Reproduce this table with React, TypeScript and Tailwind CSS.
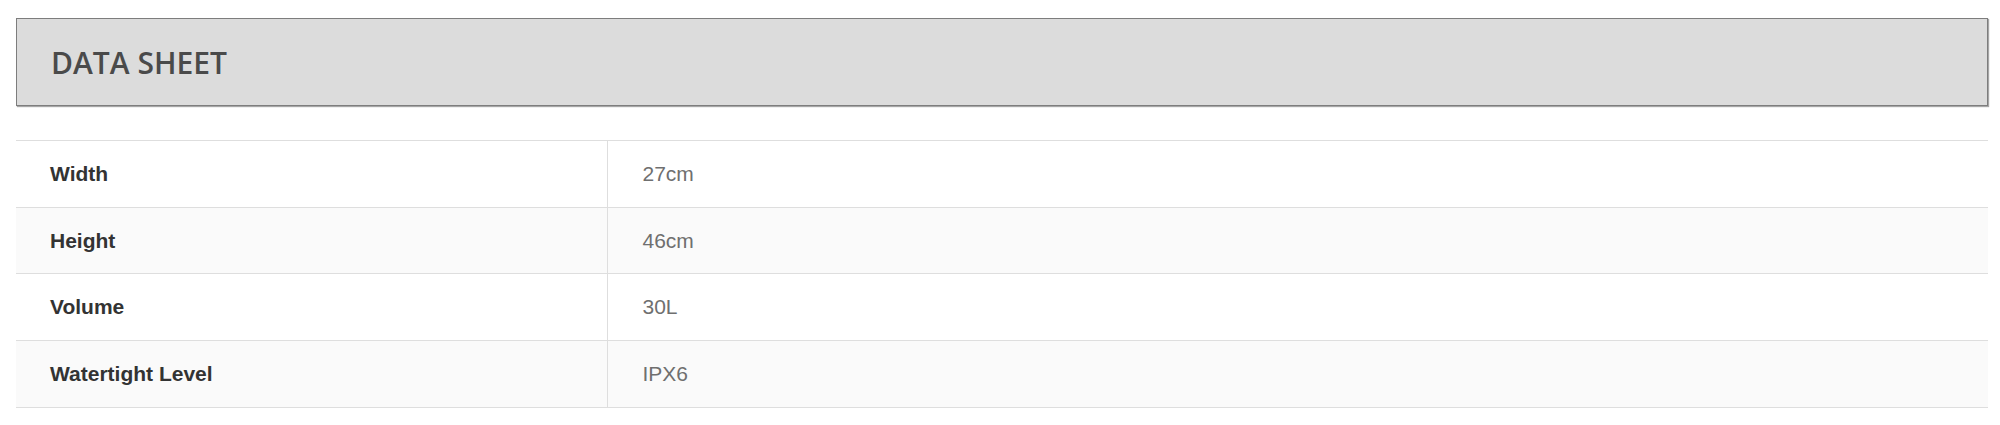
import React from "react";

interface SpecRow {
  label: string;
  value: string;
}

const specs: SpecRow[] = [
  { label: "Width", value: "27cm" },
  { label: "Height", value: "46cm" },
  { label: "Volume", value: "30L" },
  { label: "Watertight Level", value: "IPX6" },
];

const App: React.FC = () => {
  return (
    <div className="w-[2000px] h-[425px] bg-white pl-[16px] pr-[12px] pt-[18px]">
      <div className="h-[88px] bg-[#dcdcdc] border border-[#7d7d7d] shadow-[1px_1px_1px_rgba(0,0,0,0.35)] flex items-center pl-[34px]">
        <h2 className="font-['Open_Sans',sans-serif] font-semibold text-[30px] text-[#4a4a4a]">
          DATA SHEET
        </h2>
      </div>

      <table className="w-full mt-[34px] border-collapse font-['Liberation_Sans',Arial,sans-serif] text-[21px]">
        <tbody>
          {specs.map((row, index) => (
            <tr
              key={row.label}
              className={`h-[66.7px] border-t border-b border-[#dedede] ${
                index % 2 === 1 ? "bg-[#fafafa]" : "bg-white"
              }`}
            >
              <td className="w-[591px] pl-[34px] font-bold text-[#333333] border-r border-[#dedede]">
                {row.label}
              </td>
              <td className="pl-[35px] text-[#6f6f6f]">{row.value}</td>
            </tr>
          ))}
        </tbody>
      </table>
    </div>
  );
};

export default App;
